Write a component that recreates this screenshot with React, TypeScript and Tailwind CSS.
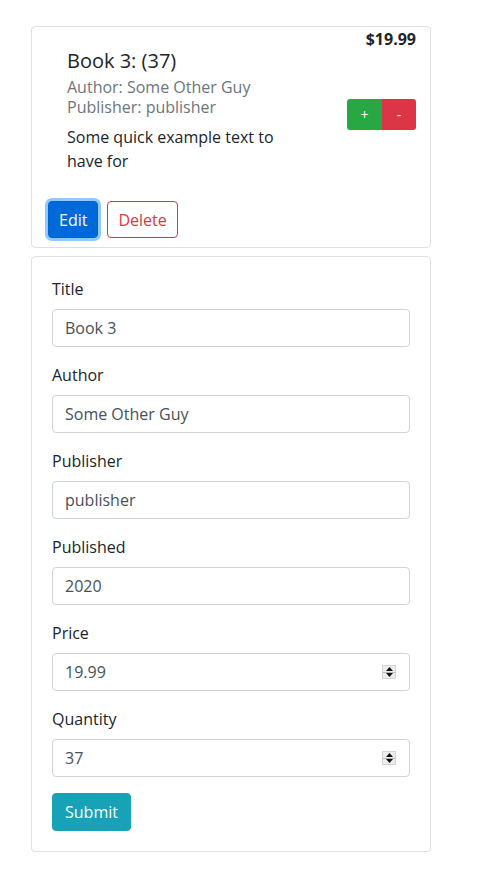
import React from "react";

const font = { fontFamily: '"Open Sans", "Noto Sans", sans-serif' };

function Spinner() {
  return (
    <div className="absolute right-[13px] top-1/2 -translate-y-1/2 w-[14px] h-[14px] bg-[#ececec] border border-[#d4d4d4] flex flex-col">
      <div className="flex-1 flex items-center justify-center border-b border-[#b8b8b8]">
        <svg width="7" height="4" viewBox="0 0 7 4"><polygon points="3.5,0 7,4 0,4" fill="#111" /></svg>
      </div>
      <div className="flex-1 flex items-center justify-center">
        <svg width="7" height="4" viewBox="0 0 7 4"><polygon points="0,0 7,0 3.5,4" fill="#111" /></svg>
      </div>
    </div>
  );
}

function Field({ label, value, spin }: { label: string; value: string; spin?: boolean }) {
  return (
    <div className="mb-4">
      <div className="text-[16px] leading-[24px] text-[#212529] mb-2">{label}</div>
      <div className="relative h-[38px] border border-[#ced4da] rounded-[4px] bg-white flex items-center px-3">
        <span className="text-[16px] leading-[24px] text-[#495057]">{value}</span>
        {spin && <Spinner />}
      </div>
    </div>
  );
}

export default function App() {
  return (
    <div className="bg-white min-h-[870px] pt-[26px] pl-[31px]" style={font}>
      <div className="w-[400px] border border-[#dfdfdf] rounded-[4px]">
        <div className="flex justify-between pr-[14px]">
          <div className="pl-[35px] pt-[22px]">
            <div className="text-[20px] leading-[24px] text-[#212529]">Book 3: (37)</div>
            <div className="mt-[4px] text-[16px] leading-[20px] text-[#6c757d]">
              <div>Author: Some Other Guy</div>
              <div>Publisher: publisher</div>
            </div>
            <div className="mt-[8px] w-[215px] text-[16px] leading-[24px] text-[#212529]">
              Some quick example text to have for
            </div>
          </div>
          <div className="flex flex-col items-end">
            <div className="text-[16px] leading-[24px] font-bold text-[#212529]">$19.99</div>
            <div className="mt-[48px] flex">
              <div className="w-[35px] h-[31px] bg-[#28a745] rounded-l-[3px] flex items-center justify-center text-white text-[14px]">+</div>
              <div className="w-[34px] h-[31px] bg-[#dc3545] rounded-r-[3px] flex items-center justify-center text-white text-[14px]">-</div>
            </div>
          </div>
        </div>
        <div className="flex items-center pl-[16px] pt-[28px] pb-[9px]">
          <div className="h-[37px] px-[10px] bg-[#0069d9] border border-[#0062cc] rounded-[4px] text-white text-[16px] leading-[24px] flex items-center shadow-[0_0_0_3px_rgba(38,143,255,0.5)]">
            Edit
          </div>
          <div className="ml-[9px] h-[37px] px-[10px] bg-white border border-[#dc3545] rounded-[4px] text-[#dc3545] text-[16px] leading-[24px] flex items-center">
            Delete
          </div>
        </div>
      </div>

      <div className="mt-[8px] w-[400px] border border-[#dfdfdf] rounded-[4px] px-5 pt-5 pb-5">
        <Field label="Title" value="Book 3" />
        <Field label="Author" value="Some Other Guy" />
        <Field label="Publisher" value="publisher" />
        <Field label="Published" value="2020" />
        <Field label="Price" value="19.99" spin />
        <Field label="Quantity" value="37" spin />
        <div className="inline-flex h-[38px] px-3 items-center bg-[#17a2b8] border border-[#17a2b8] rounded-[4px] text-white text-[16px] leading-[24px]">
          Submit
        </div>
      </div>
    </div>
  );
}
